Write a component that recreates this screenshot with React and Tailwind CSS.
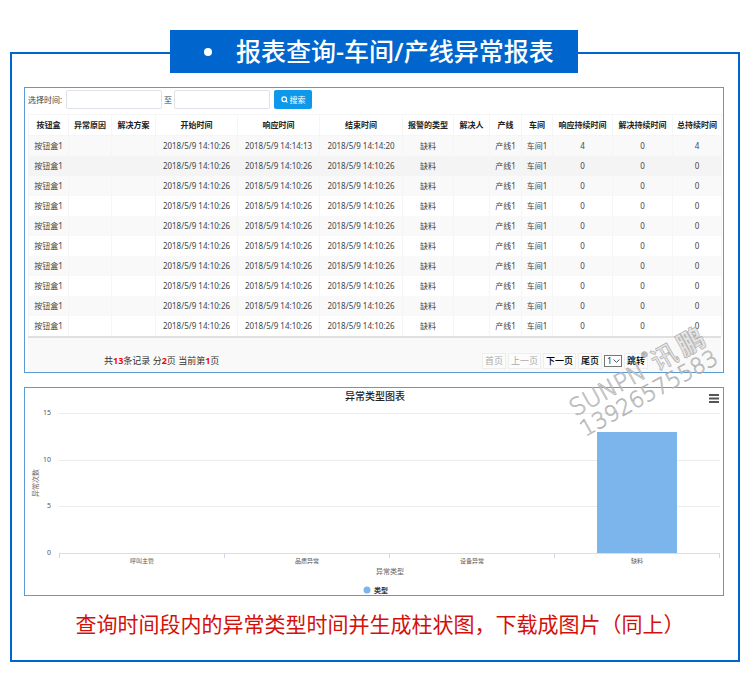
import { Search } from 'lucide-react';

const columns = [
  { title: '按钮盒', width: 'w-[40px]' },
  { title: '异常原因', width: 'w-[43px]' },
  { title: '解决方案', width: 'w-[44px]' },
  { title: '开始时间', width: 'w-[82px]' },
  { title: '响应时间', width: 'w-[82px]' },
  { title: '结束时间', width: 'w-[83px]' },
  { title: '报警的类型', width: 'w-[51px]' },
  { title: '解决人', width: 'w-[36px]' },
  { title: '产线', width: 'w-[32px]' },
  { title: '车间', width: 'w-[31px]' },
  { title: '响应持续时间', width: 'w-[60px]' },
  { title: '解决持续时间', width: 'w-[60px]' },
  { title: '总持续时间', width: 'w-[49px]' },
];

const start = '2018/5/9 14:10:26';

const makeRow = (response, end, waited, total) => [
  '按钮盒1', '', '', start, response, end, '缺料', '', '产线1', '车间1', waited, '0', total,
];

const rows = [
  makeRow('2018/5/9 14:14:13', '2018/5/9 14:14:20', '4', '4'),
  ...Array.from({ length: 9 }, () => makeRow(start, start, '0', '0')),
];

// the second row is the hovered one
const rowColor = (i) => {
  if (i === 1) return 'bg-[#f4f4f4]';
  return i % 2 === 0 ? 'bg-[#f9f9f9]' : 'bg-white';
};

const SearchBar = () => (
  <form className="flex items-center pl-[3px] pt-[2px] text-[8px] text-[#444]" onSubmit={(e) => e.preventDefault()}>
    <label htmlFor="from" className="w-[38px]">选择时间:</label>
    <input id="from" type="text" className="h-[19px] w-24 rounded-[2px] border border-[#dfe2e8] px-1" />
    <label htmlFor="to" className="w-3 text-center">至</label>
    <input id="to" type="text" className="h-[19px] w-24 rounded-[2px] border border-[#dfe2e8] px-1" />
    <button type="submit" className="ml-1 flex h-[19px] w-[38px] items-center justify-center gap-[2px] rounded-[2px] bg-[#0e98ea] text-white">
      <Search className="h-[7px] w-[7px]" strokeWidth={4} />
      搜索
    </button>
  </form>
);

const ReportTable = () => (
  <table className="mt-[5px] w-full table-fixed border-collapse text-center text-[8px] leading-3 text-[#444]">
    <thead>
      <tr className="h-[21px]">
        {columns.map((col) => (
          <th key={col.title} className={`${col.width} whitespace-nowrap border border-[#f5f5f5] p-0 font-bold text-[#222]`}>
            {col.title}
          </th>
        ))}
      </tr>
    </thead>
    <tbody>
      {rows.map((row, i) => (
        <tr key={i} className={`h-5 ${rowColor(i)}`}>
          {row.map((cell, j) => (
            <td key={j} className="whitespace-nowrap border-x border-[#f5f5f5] p-0">{cell}</td>
          ))}
        </tr>
      ))}
    </tbody>
  </table>
);

const pageButton = 'h-4 border border-[#eee] px-[2px] bg-[#fcfcfc]';

const Pager = () => (
  <div className="flex h-9 items-center justify-between border-t-2 border-[#e0e0e0] bg-[#f9f9f9] pl-[76px] pr-[73px] pt-3 text-[9px] leading-3 text-[#333]">
    <p>
      共<b className="text-[#f00]">13</b>条记录 分<b className="text-[#f00]">2</b>页 当前第<b className="text-[#f00]">1</b>页
    </p>
    <div className="flex items-center gap-[2px]">
      <button type="button" disabled className={`${pageButton} text-[#aaa]`}>首页</button>
      <button type="button" disabled className={`${pageButton} text-[#aaa]`}>上一页</button>
      <button type="button" className={`${pageButton} font-medium text-black`}>下一页</button>
      <button type="button" className={`${pageButton} font-medium text-black`}>尾页</button>
      <span className="relative flex">
        <select aria-label="页码" className="h-3 w-[18px] appearance-none border border-[#777] bg-white pl-[2px] text-[9px] leading-[10px]">
          <option>1</option>
          <option>2</option>
        </select>
        <svg className="pointer-events-none absolute right-[2px] top-1 h-1 w-[7px]" viewBox="0 0 7 4" fill="none" stroke="#555">
          <path d="M.5.5 3.5 3.3 6.5.5" />
        </svg>
      </span>
      <button type="button" className={`${pageButton} font-medium text-black`}>跳转</button>
    </div>
  </div>
);

const ticks = [15, 10, 5, 0];
const categories = [
  { name: '呼叫主管', value: 0 },
  { name: '品质异常', value: 0 },
  { name: '设备异常', value: 0 },
  { name: '缺料', value: 13 },
];
const left = 34;
const slot = 165;
const base = 165;
const yOf = (v) => Math.round(base - (v * 140) / 15);

const Chart = () => (
  <svg viewBox="0 0 698 207" className="block w-full" role="img" aria-label="异常类型图表">
    <text x="350" y="12" textAnchor="middle" fontSize="10" fontWeight="500" fill="#222">异常类型图表</text>
    <path d="M684 7h10M684 10.5h10M684 14h10" stroke="#555" strokeWidth="1.8" />

    {ticks.map((t) => (
      <g key={t}>
        <path d={`M${left} ${yOf(t) + 0.5}H695`} stroke={t === 0 ? '#d3dfee' : '#ececec'} />
        <text x="26" y={yOf(t) + 2} textAnchor="end" fontSize="7" fill="#555">{t}</text>
      </g>
    ))}
    {[0, 1, 2, 3, 4].map((i) => (
      <path key={i} d={`M${left + i * slot + 0.5} ${base}v5`} stroke="#ccd6eb" />
    ))}

    {categories.map((c, i) => (
      <g key={c.name}>
        {c.value > 0 && (
          <rect x={left + i * slot + 43} y={yOf(c.value)} width="80" height={base - yOf(c.value)} fill="#7cb5ec" />
        )}
        <text x={left + i * slot + 83} y="175" textAnchor="middle" fontSize="6" fill="#555">{c.name}</text>
      </g>
    ))}

    <text x="13" y="95" textAnchor="middle" fontSize="7" fill="#666" transform="rotate(-90 13 95)">异常次数</text>
    <text x="365" y="186" textAnchor="middle" fontSize="7" fill="#666">异常类型</text>
    <circle cx="342" cy="202" r="3.5" fill="#7cb5ec" />
    <text x="349" y="205" fontSize="7" fontWeight="700" fill="#333">类型</text>
  </svg>
);

const Watermark = () => (
  <svg
    className="pointer-events-none absolute right-[25px] top-[315px] h-[125px] w-[165px] overflow-visible font-['DejaVu_Sans','Noto_Sans_CJK_SC',sans-serif]"
    viewBox="0 0 165 125"
    fill="#ddd"
    fillOpacity="0.7"
    stroke="#aaa"
    strokeWidth="0.6"
    aria-hidden="true"
  >
    <g transform="translate(15 102) rotate(-29)">
      <text fontSize="24" fontWeight="200">SUNPN</text>
      <text x="87" y="-18" fontSize="8">®</text>
      <text x="94" fontSize="26" fontWeight="500">讯</text>
      <text x="124" fontSize="27" fontWeight="900">鹏</text>
    </g>
    <text transform="translate(25 122) rotate(-29)" fontSize="22" fontWeight="200">13926575583</text>
  </svg>
);

export default function App() {
  return (
    <div className="relative min-h-screen bg-white px-[10px] pt-[52px] font-['Noto_Sans','Noto_Sans_CJK_SC',sans-serif]">
      <main className="flex flex-col border-2 border-[#0066cd] pb-5 pl-3 pr-[14px]">
        <h1 className="-mt-6 flex h-[43px] w-[408px] items-center gap-6 self-center bg-[#0066cd] pl-[34px] text-[25px] font-medium text-white">
          <span className="h-2 w-2 rounded-full bg-white" />
          报表查询-车间/产线异常报表
        </h1>

        <section className="mt-[14px] border border-[#5b9bd5]">
          <SearchBar />
          <div className="pl-[3px] pr-[2px]">
            <ReportTable />
            <Pager />
          </div>
        </section>

        <section className="mt-[14px] border border-[#5b9bd5]">
          <Chart />
        </section>

        <p className="mt-3 pl-3 text-center text-[21px] leading-8 text-[#d3100b]">
          查询时间段内的异常类型时间并生成柱状图，下载成图片（同上）
        </p>
      </main>
      <Watermark />
    </div>
  );
}
